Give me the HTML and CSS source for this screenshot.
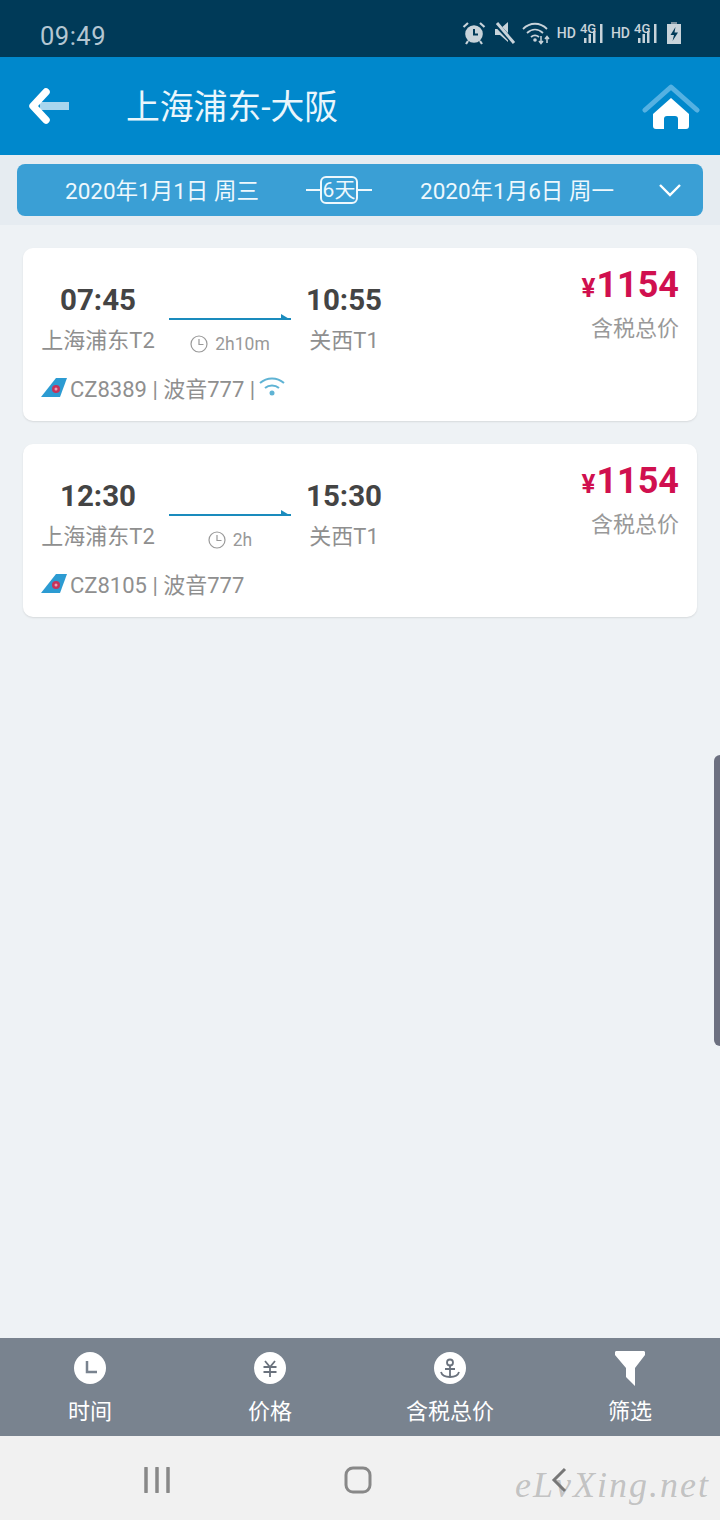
FILE: index.html
```html
<!DOCTYPE html>
<html lang="zh">
<head>
    <meta charset="UTF-8">
    <meta name="viewport" content="width=device-width, initial-scale=1.0">
    <title>上海浦东-大阪</title>
    <link rel="stylesheet" href="styles.css">
</head>
<body>
    <div class="page">
        <!-- status bar -->
        <div class="status">
            <span class="clock">09:49</span>
            <div class="status-icons">
                <svg width="24" height="24" viewBox="0 0 24 24" class="ic-alarm">
                    <circle cx="12" cy="13" r="8.8" fill="#c8d3da"/>
                    <path d="M12 8v5.500h4" fill="none" stroke="#003a58" stroke-width="2"/>
                    <path d="M1.500 6 6 2M22.500 6 18 2M6 20l-2 3M18 20l2 3" stroke="#c8d3da" stroke-width="2.200" fill="none"/>
                </svg>
                <svg width="22" height="24" viewBox="0 0 22 24" class="ic-mute">
                    <path d="M1 8h5l8-7v20l-8-7H1z" fill="#c8d3da"/>
                    <path d="M1 2l19 20" stroke="#003a58" stroke-width="5"/>
                    <path d="M3 2l17 20" stroke="#c8d3da" stroke-width="3"/>
                </svg>
                <svg width="30" height="24" viewBox="0 0 30 24" class="ic-wifi">
                    <path d="M2 8c7-7 17-7 24 0M6 12c5-4.500 11-4.500 16 0M10 16c2.500-2 5.500-2 8 0" fill="none" stroke="#c8d3da" stroke-width="1.800"/>
                    <circle cx="14" cy="19" r="1.800" fill="#c8d3da"/>
                    <path d="M20 15v7M18 20l2 2.500 2-2.500M26 22v-6M24 18l2-2.500 2 2.500" fill="none" stroke="#c8d3da" stroke-width="1.500"/>
                </svg>
                <span class="hd">HD</span>
                <span class="signal"><b>4G</b><svg width="26" height="24" viewBox="0 0 26 24"><path d="M5 17h2.500v5H5zM9.500 13H12v9H9.500zM14 10h2.500v12H14zM21 3h2.500v19H21z" fill="#c8d3da"/></svg></span>
                <span class="hd">HD</span>
                <span class="signal"><b>4G</b><svg width="26" height="24" viewBox="0 0 26 24"><path d="M5 17h2.500v5H5zM9.500 13H12v9H9.500zM14 10h2.500v12H14zM21 3h2.500v19H21z" fill="#c8d3da"/></svg></span>
                <svg width="16" height="24" viewBox="0 0 16 24" class="ic-batt">
                    <path d="M5 1h6v2H5z" fill="#7d93a1"/>
                    <path d="M1 3h14v20H1z" fill="#c8d3da"/>
                    <path d="M9.500 6 4.500 14H8l-1.500 6 5.500-8.500H8.500z" fill="#003a58"/>
                </svg>
            </div>
        </div>

        <!-- title bar -->
        <div class="titlebar">
            <svg width="42" height="40" viewBox="0 0 42 40" class="back">
                <path d="M12 16h29v8H12z" fill="#a9d6ee"/>
                <path d="M18 6 5 20l13 14" fill="none" stroke="#fff" stroke-width="7.500" stroke-linecap="round" stroke-linejoin="round"/>
            </svg>
            <h1 class="title">上海浦东-大阪</h1>
            <svg width="58" height="46" viewBox="0 0 58 46" class="home">
                <path d="M3 27 29 4l26 23" fill="none" stroke="#55b1e2" stroke-width="5" stroke-linecap="round" stroke-linejoin="round"/>
                <path d="M29 15 47 31v12a3 3 0 0 1-3 3H36V36a3 3 0 0 0-3-3h-8a3 3 0 0 0-3 3v10h-8a3 3 0 0 1-3-3V31z" fill="#fff"/>
            </svg>
        </div>

        <!-- dates -->
        <div class="datewrap">
            <div class="datebar">
                <span class="date date-go">2020年1月1日 周三</span>
                <span class="days"><i></i><em>6天</em><i></i></span>
                <span class="date date-back">2020年1月6日 周一</span>
                <svg width="24" height="14" viewBox="0 0 24 14" class="chev">
                    <path d="M2 2l10 10L22 2" fill="none" stroke="#fff" stroke-width="2.400"/>
                </svg>
            </div>
        </div>

        <!-- flights -->
        <main class="list">
            <div class="card">
                <div class="card-main">
                    <div class="route">
                        <div class="stop stop-from">
                            <div class="time">07:45</div>
                            <div class="port">上海浦东T2</div>
                        </div>
                        <div class="leg">
                            <div class="leg-line"></div>
                            <div class="leg-dur">
                                <svg width="18" height="18" viewBox="0 0 18 18"><circle cx="9" cy="9" r="8" fill="none" stroke="#999" stroke-width="1.200"/><path d="M9 4v5.500h4.500" fill="none" stroke="#999" stroke-width="1.200"/></svg>
                                <span>2h10m</span>
                            </div>
                        </div>
                        <div class="stop stop-to">
                            <div class="time">10:55</div>
                            <div class="port">关西T1</div>
                        </div>
                    </div>
                    <div class="flight">
                        <svg width="28" height="20" viewBox="0 0 28 20"><path d="M0 20 15 1h11l-7 19z" fill="#2c9bd2"/><circle cx="15" cy="12" r="4" fill="#c6335a"/><circle cx="15" cy="12" r="1.500" fill="#e8a0b8"/></svg>
                        <span>CZ8389 | 波音777 |</span>
                        <svg width="26" height="20" viewBox="0 0 26 20" class="wifi"><path d="M1 6c7-6 17-6 24 0M6 11c4-3.500 10-3.500 14 0" fill="none" stroke="#5fb3d4" stroke-width="2"/><circle cx="13" cy="16" r="2.500" fill="#5fb3d4"/></svg>
                    </div>
                </div>
                <div class="fare">
                    <div class="price"><small>¥</small>1154</div>
                    <div class="fare-note">含税总价</div>
                </div>
            </div>

            <div class="card">
                <div class="card-main">
                    <div class="route">
                        <div class="stop stop-from">
                            <div class="time">12:30</div>
                            <div class="port">上海浦东T2</div>
                        </div>
                        <div class="leg">
                            <div class="leg-line"></div>
                            <div class="leg-dur">
                                <svg width="18" height="18" viewBox="0 0 18 18"><circle cx="9" cy="9" r="8" fill="none" stroke="#999" stroke-width="1.200"/><path d="M9 4v5.500h4.500" fill="none" stroke="#999" stroke-width="1.200"/></svg>
                                <span>2h</span>
                            </div>
                        </div>
                        <div class="stop stop-to">
                            <div class="time">15:30</div>
                            <div class="port">关西T1</div>
                        </div>
                    </div>
                    <div class="flight">
                        <svg width="28" height="20" viewBox="0 0 28 20"><path d="M0 20 15 1h11l-7 19z" fill="#2c9bd2"/><circle cx="15" cy="12" r="4" fill="#c6335a"/><circle cx="15" cy="12" r="1.500" fill="#e8a0b8"/></svg>
                        <span>CZ8105 | 波音777</span>
                    </div>
                </div>
                <div class="fare">
                    <div class="price"><small>¥</small>1154</div>
                    <div class="fare-note">含税总价</div>
                </div>
            </div>
            <div class="edge-handle"></div>
        </main>

        <!-- sort bar -->
        <div class="tabs">
            <div class="tab">
                <svg width="32" height="32" viewBox="0 0 32 32"><circle cx="16" cy="16" r="16" fill="#fff"/><path d="M13 9v11h10" fill="none" stroke="#79838f" stroke-width="2.500"/></svg>
                <span>时间</span>
            </div>
            <div class="tab">
                <svg width="32" height="32" viewBox="0 0 32 32"><circle cx="16" cy="16" r="16" fill="#fff"/><path d="M11 9l5 6 5-6M9.500 15h13M9.500 20h13M16 15v10" fill="none" stroke="#6a727d" stroke-width="1.800"/></svg>
                <span>价格</span>
            </div>
            <div class="tab">
                <svg width="32" height="32" viewBox="0 0 32 32"><circle cx="16" cy="16" r="16" fill="#fff"/><circle cx="16" cy="10.500" r="3" fill="none" stroke="#6a727d" stroke-width="1.800"/><path d="M16 13.500V25M11 17h10M7 20c1 3.500 5 5 9 5s8-1.500 9-5" fill="none" stroke="#6a727d" stroke-width="1.800"/></svg>
                <span>含税总价</span>
            </div>
            <div class="tab">
                <svg width="32" height="36" viewBox="0 0 32 36" class="funnel"><path d="M1 1a2 2 0 0 1 1-1h28a2 2 0 0 1 1 1v3L21 17v18l-9-9V17L1 4z" fill="#fff"/></svg>
                <span>筛选</span>
            </div>
        </div>

        <!-- android nav -->
        <div class="navbar">
            <div class="nav-slot">
                <svg width="28" height="26" viewBox="0 0 28 26"><path d="M3 1v24M14 1v24M25 1v24" stroke="#888" stroke-width="3.500" stroke-linecap="round"/></svg>
            </div>
            <div class="nav-slot">
                <svg width="28" height="28" viewBox="0 0 28 28"><rect x="2" y="2" width="24" height="24" rx="7" fill="none" stroke="#888" stroke-width="3"/></svg>
            </div>
            <div class="nav-slot">
                <svg width="16" height="26" viewBox="0 0 16 26"><path d="M14 2 3 13l11 11" fill="none" stroke="#777" stroke-width="3"/></svg>
            </div>
            <span class="watermark">eLvXing.net</span>
        </div>
    </div>
</body>
</html>
```

FILE: styles.css
```css
* {
    box-sizing: border-box;
}

body {
    margin: 0;
    font-family: Roboto, "Noto Sans CJK SC", sans-serif;
    background-color: #eef2f5;
}

.page {
    width: 720px;
    height: 1520px;
    display: flex;
    flex-direction: column;
    overflow: hidden;
}

.status {
    height: 57px;
    flex: none;
    display: flex;
    align-items: center;
    justify-content: space-between;
    padding: 8px 38px 0 40px;
    background-color: #003a58;
}

.clock {
    margin-top: 6px;
    font-size: 25.500px;
    letter-spacing: 0.5px;
    color: #b4c6d2;
}

.status-icons {
    display: flex;
    align-items: center;
    gap: 3px;
}

.ic-alarm {
    margin-right: 5px;
}

.ic-mute {
    margin-right: 2px;
}

.ic-batt {
    margin-left: 4px;
}

.hd {
    font-size: 14px;
    font-weight: 500;
    color: #c8d3da;
    margin-left: 3px;
}

.signal {
    position: relative;
    display: flex;
    width: 26px;
}

.signal b {
    position: absolute;
    left: 1px;
    top: 0;
    font-size: 13px;
    font-weight: 500;
    color: #c8d3da;
}

.titlebar {
    height: 98px;
    flex: none;
    display: flex;
    align-items: center;
    padding: 0 20px 0 28px;
    background-color: #0088cc;
}

.back {
    flex: none;
}

.title {
    flex: 1;
    margin: 0 0 4px 56px;
    font-size: 33.800px;
    font-weight: 400;
    color: #eaf6fc;
}

.home {
    flex: none;
}

.datewrap {
    height: 70px;
    flex: none;
    padding: 9px 17px;
    background-color: #e6ecf1;
}

.datebar {
    height: 52px;
    display: flex;
    align-items: center;
    padding-left: 48px;
    border-radius: 8px;
    background-color: #3a9fd5;
    color: #eef8fd;
}

.date {
    margin-bottom: 3px;
    font-size: 22.500px;
    white-space: nowrap;
}

.date-go {
    width: 241px;
}

.date-back {
    width: 238px;
    margin-left: 48px;
}

.days {
    width: 66px;
    display: flex;
    align-items: center;
}

.days i {
    flex: 1;
    height: 2px;
    background-color: #eef8fd;
}

.days em {
    width: 38px;
    height: 28px;
    font-style: normal;
    font-size: 21px;
    line-height: 24px;
    text-align: center;
    white-space: nowrap;
    border: 2px solid #eef8fd;
    border-radius: 6px;
}

.list {
    position: relative;
    flex: 1;
    display: flex;
    flex-direction: column;
    gap: 23px;
    padding: 23px 23px 0;
}

.card {
    height: 173px;
    flex: none;
    display: flex;
    justify-content: space-between;
    padding: 0 18px;
    border-radius: 10px;
    background-color: #fff;
    box-shadow: 0 1px 2px rgba(0, 0, 0, 0.1);
}

.card-main {
    display: flex;
    flex-direction: column;
}

.route {
    display: flex;
    height: 123px;
    padding-top: 31px;
}

.stop {
    text-align: center;
    white-space: nowrap;
}

.stop-from {
    width: 114px;
}

.stop-to {
    width: 106px;
}

.time {
    height: 42px;
    font-size: 29.500px;
    font-weight: 700;
    line-height: 42px;
    color: #444;
}

.port {
    font-size: 22px;
    line-height: 40px;
    color: #8f8f8f;
}

.leg {
    width: 122px;
    margin-left: 14px;
}

.leg-line {
    position: relative;
    height: 2px;
    margin-top: 39px;
    background-color: #1a8bbd;
}

.leg-line::after {
    content: "";
    position: absolute;
    right: 0;
    bottom: 0;
    border-left: 10px solid #1a8bbd;
    border-top: 6px solid transparent;
}

.leg-dur {
    display: flex;
    align-items: center;
    justify-content: center;
    gap: 7px;
    margin-top: 12px;
    font-size: 17.500px;
    line-height: 24px;
    color: #999;
}

.flight {
    display: flex;
    align-items: center;
    font-size: 22px;
    color: #8f8f8f;
    white-space: nowrap;
}

.flight span {
    margin-left: 1px;
}

.flight svg {
    flex: none;
}

.wifi {
    margin-left: 4px;
}

.fare {
    padding-top: 15px;
    text-align: right;
}

.price {
    height: 44px;
    font-size: 36px;
    font-weight: 700;
    line-height: 44px;
    color: #d0104f;
}

.price small {
    margin-right: 1px;
    font-size: 26px;
}

.fare-note {
    margin-top: 6px;
    font-size: 22px;
    line-height: 32px;
    color: #999;
}

.edge-handle {
    position: absolute;
    right: 0;
    top: 530px;
    width: 6px;
    height: 291px;
    border-radius: 6px 0 0 6px;
    background-color: #6c7080;
}

.tabs {
    height: 98px;
    flex: none;
    display: grid;
    grid-template-columns: repeat(4, 1fr);
    background-color: #79838f;
}

.tab {
    display: flex;
    flex-direction: column;
    align-items: center;
    padding-top: 14px;
    font-size: 22px;
    color: #fff;
}

.tab span {
    margin-top: 10px;
    line-height: 36px;
}

.funnel {
    margin-top: -1px;
    margin-bottom: -3px;
}

.navbar {
    position: relative;
    height: 84px;
    flex: none;
    display: flex;
    align-items: center;
    padding: 0 62px 0 67px;
    background-color: #f1f1f1;
}

.nav-slot {
    width: 180px;
    display: flex;
    justify-content: center;
    margin-top: 4px;
}

.nav-slot + .nav-slot {
    margin-left: 21px;
}

.watermark {
    position: absolute;
    left: 515px;
    top: 28px;
    font-family: "Liberation Serif", serif;
    font-style: italic;
    font-size: 36px;
    letter-spacing: 2px;
    color: rgba(120, 120, 120, 0.4);
}
```
